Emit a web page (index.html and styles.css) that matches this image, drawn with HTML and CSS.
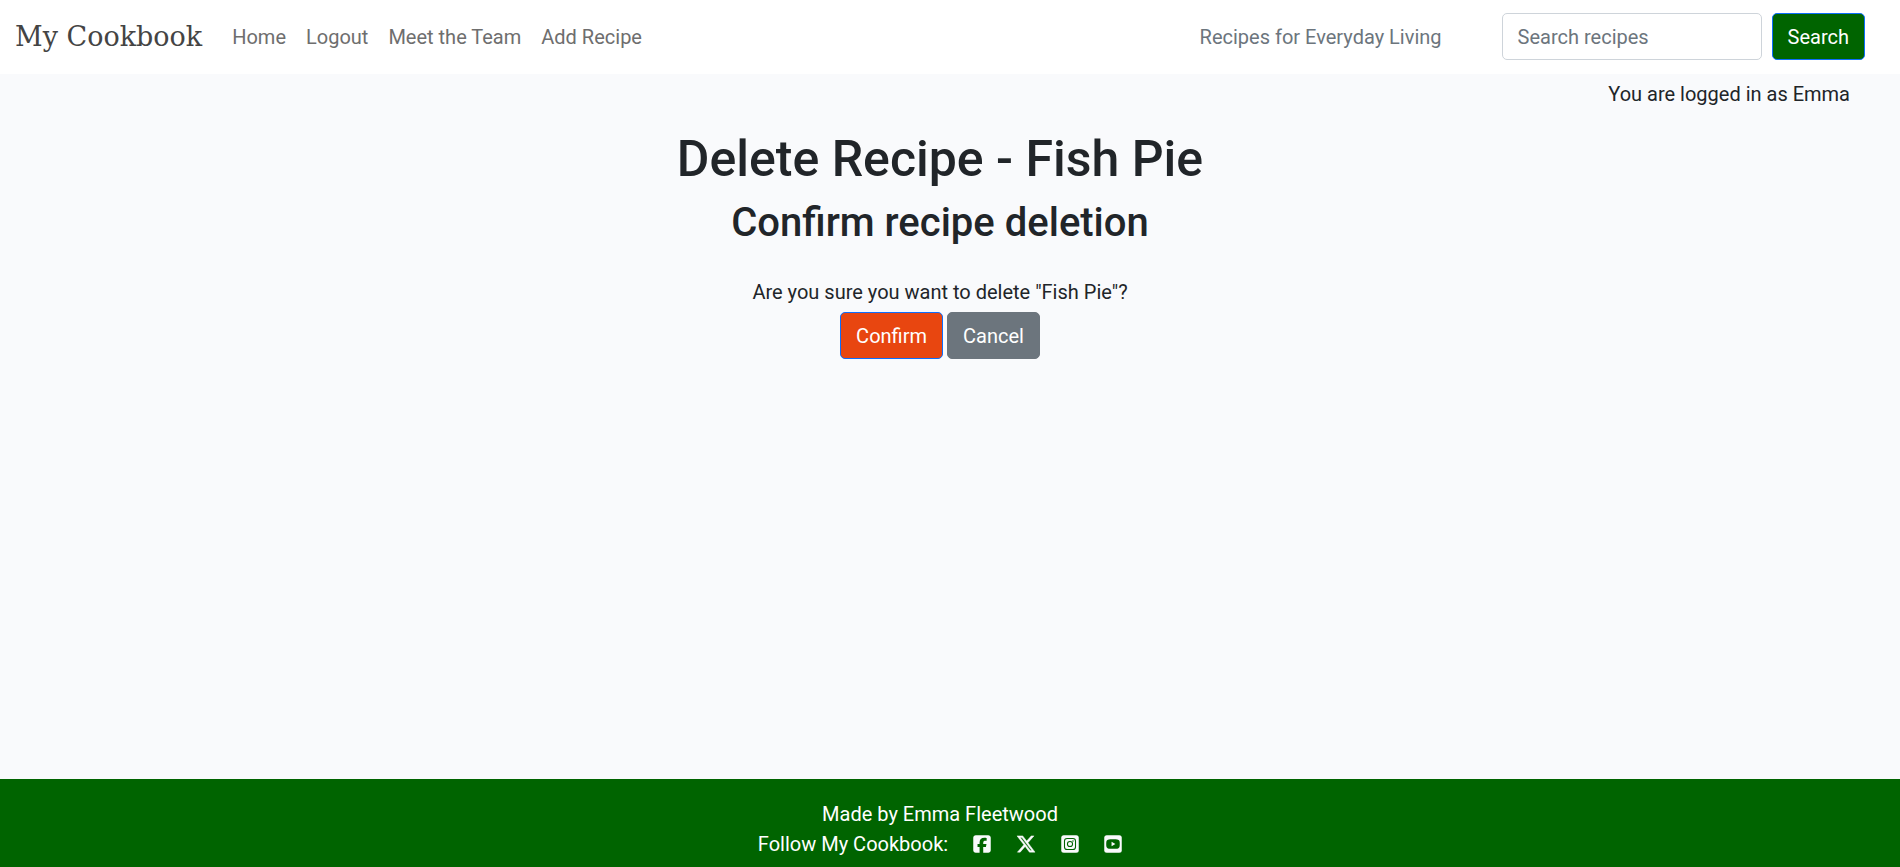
FILE: index.html
```html
<!DOCTYPE html>
<html lang="en">
<head>
<meta charset="utf-8">
<meta name="viewport" content="width=device-width, initial-scale=1">
<title>My Cookbook</title>
<link rel="stylesheet" href="styles.css">
</head>
<body>
<header class="navbar">
  <a class="brand" href="#">My Cookbook</a>
  <nav class="nav-links">
    <a href="#">Home</a>
    <a href="#">Logout</a>
    <a href="#">Meet the Team</a>
    <a href="#">Add Recipe</a>
  </nav>
  <span class="tagline">Recipes for Everyday Living</span>
  <form class="search">
    <input class="search-input" type="search" placeholder="Search recipes" aria-label="Search recipes">
    <button class="btn btn-search" type="submit">Search</button>
  </form>
</header>
<p class="login-status">You are logged in as Emma</p>
<main class="content">
  <h1>Delete Recipe - Fish Pie</h1>
  <h2>Confirm recipe deletion</h2>
  <form class="confirm">
    <p>Are you sure you want to delete "Fish Pie"?</p>
    <div class="actions">
      <button class="btn btn-confirm" type="submit">Confirm</button>
      <a class="btn btn-cancel" href="#">Cancel</a>
    </div>
  </form>
</main>
<footer class="footer">
  <p>Made by Emma Fleetwood</p>
  <div class="follow">
    <span>Follow My Cookbook:</span>
    <a href="#" aria-label="Facebook"><svg class="icon" viewBox="0 0 448 512"><path d="M64 32C28.700 32 0 60.700 0 96V416c0 35.300 28.700 64 64 64h98.200V334.200H109.400V256h52.800V222.300c0-87.100 39.400-127.500 125-127.500c16.200 0 44.200 3.200 55.700 6.400V172c-6-.6-16.500-1-29.600-1c-42 0-58.200 15.900-58.200 57.200V256h83.600l-14.400 78.200H255V480H384c35.300 0 64-28.700 64-64V96c0-35.300-28.700-64-64-64H64z"/></svg></a>
    <a href="#" aria-label="X"><svg class="icon icon-x" viewBox="0 0 512 512"><path d="M389.200 48h70.600L305.600 224.200 487 464H345L233.700 318.600 106.500 464H35.800L200.700 275.500 26.800 48H172.400L272.900 180.900 389.200 48zM364.400 421.800h39.100L151.100 88h-42L364.400 421.800z"/></svg></a>
    <a href="#" aria-label="Instagram"><svg class="icon" viewBox="0 0 448 512"><rect y="32" width="448" height="448" rx="64"/><g fill="none" stroke="#006400" stroke-width="27"><rect x="83" y="115" width="282" height="282" rx="66"/><circle cx="224" cy="256" r="66"/></g><circle cx="300" cy="180" r="18" fill="#006400"/></svg></a>
    <a href="#" aria-label="YouTube"><svg class="icon" viewBox="0 0 448 512"><rect y="32" width="448" height="448" rx="64"/><path fill="#006400" d="M224 136c-45 0-100 1-130 8c-18 4-31 17-36 35c-10 36-10 118 0 154c5 18 18 30 36 35c60 10 200 10 260 0c18-5 31-17 36-35c10-36 10-118 0-154c-5-18-18-31-36-35c-30-7-85-8-130-8z"/><path d="M187 200v112l98-56z"/></svg></a>
  </div>
</footer>
</body>
</html>
```
FILE: styles.css
```css
* { box-sizing: border-box; }

body {
  display: flex;
  flex-direction: column;
  min-height: 100vh;
  margin: 0;
  background: #f9fafc;
  color: #212529;
  font: 400 20px/30px Roboto, sans-serif;
}

h1, h2, p { margin: 0; }

a { color: inherit; text-decoration: none; }

.navbar {
  display: flex;
  align-items: center;
  padding: 13px 35px 14px 15px;
  background: #fff;
}

.brand {
  margin-right: 30px;
  color: #444;
  font: 27px/36px "DejaVu Serif", serif;
}

.nav-links {
  display: flex;
  gap: 20px;
  color: #6e6e6e;
}

.tagline {
  margin-left: auto;
  color: #6c757d;
}

.search {
  display: flex;
  gap: 10px;
  margin-left: 60px;
}

.search-input {
  width: 260px;
  padding: 7px 15px;
  border: 1px solid #ced4da;
  border-radius: 5px;
  background: #fff;
  font: inherit;
  appearance: none;
}

.search-input::placeholder { color: #6c757d; opacity: 1; }

.btn {
  padding: 8px 15px 7px;
  border: 1px solid;
  border-radius: 5px;
  color: #fff;
  font: inherit;
}

.btn-search { border-color: #0d6efd; background: #006400; }
.btn-confirm { border-color: #0d6efd; background: #e84610; }
.btn-cancel { border-color: #6c757d; background: #6c757d; }

.login-status {
  padding: 5px 50px 0 0;
  text-align: right;
}

.content {
  flex: 1;
  padding: 20px 20px 0 0;
  text-align: center;
}

h1, h2 {
  margin-bottom: 10px;
  font-weight: 500;
  line-height: 1.2;
}

h1 { font-size: 50px; }
h2 { font-size: 40px; }

.confirm { margin-top: 30px; }

.actions {
  display: flex;
  justify-content: center;
  gap: 4px;
  margin-top: 5px;
}

.footer {
  padding: 20px 20px 8px 0;
  background: #006400;
  color: #fff;
  text-align: center;
}

.follow {
  display: flex;
  justify-content: center;
  gap: 25px;
}

.icon {
  display: block;
  width: 18px;
  height: 20px;
  margin-top: 5px;
  fill: #f9fafc;
}

.icon-x {
  width: 20px;
  stroke: #f9fafc;
  stroke-width: 12;
}
```
